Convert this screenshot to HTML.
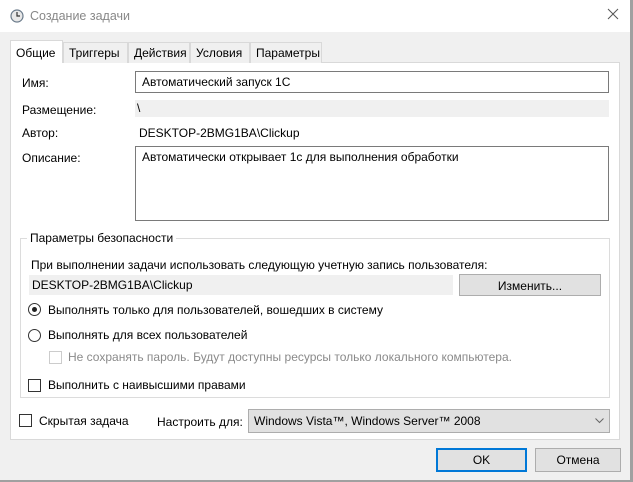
<!DOCTYPE html><html><head><meta charset="utf-8"><style>
*{box-sizing:border-box}body{margin:0;width:633px;height:482px;overflow:hidden;background:#f0f0f0;font-family:"Liberation Sans",sans-serif;font-size:12px;color:#000;position:relative}
.a{position:absolute;white-space:nowrap}
.title{left:0;top:0;width:633px;height:32px;background:#fff}
.tab{top:42px;height:21px;border:1px solid #d9d9d9;border-bottom:none;background:#f0f0f0;padding:3px 5px 0;font-size:12px}
.panel{left:10px;top:62px;width:610px;height:378px;background:#fff;border:1px solid #d9d9d9}
.inp{border:1px solid #7a7a7a;background:#fff;padding:3px 6px}
.gray{background:#f0f0f0}
.btn{border:1px solid #adadad;background:#e1e1e1;text-align:center;padding-top:4px}
.cb{width:13px;height:13px;border:1px solid #333;background:#fff}
.rd{width:13px;height:13px;border:1px solid #333;border-radius:50%;background:#fff}
</style></head><body>
<div class="a title"></div>
<svg class="a" style="left:10px;top:9px" width="14" height="14"><circle cx="7" cy="7" r="6" fill="#e8e8e8" stroke="#6a7a8a" stroke-width="1.2"/><path d="M7 3V7H10" stroke="#333" fill="none" stroke-width="1.2"/></svg>
<div class="a" style="left:30px;top:9px;color:#888;font-size:12.5px">Создание задачи</div>
<svg class="a" style="left:607px;top:8px" width="12" height="12"><path d="M1 1L11 11M11 1L1 11" stroke="#555" stroke-width="1"/></svg>
<div class="a panel"></div>
<div class="a tab" style="left:10px;top:40px;height:23px;background:#fff;width:53px;border-color:#d9d9d9;padding-top:5px">Общие</div>
<div class="a tab" style="left:63px;width:65px">Триггеры</div>
<div class="a tab" style="left:128px;width:62px">Действия</div>
<div class="a tab" style="left:190px;width:60px">Условия</div>
<div class="a tab" style="left:250px;width:72px">Параметры</div>
<div class="a" style="left:22px;top:76px">Имя:</div>
<div class="a inp" style="left:135px;top:71px;width:474px;height:22px">Автоматический запуск 1С</div>
<div class="a" style="left:22px;top:103px">Размещение:</div>
<div class="a gray" style="left:135px;top:100px;width:474px;height:17px;padding:1px 2px">\</div>
<div class="a" style="left:22px;top:126px">Автор:</div>
<div class="a" style="left:139px;top:126px">DESKTOP-2BMG1BA\Clickup</div>
<div class="a" style="left:22px;top:151px">Описание:</div>
<div class="a inp" style="left:135px;top:146px;width:474px;height:75px">Автоматически открывает 1с для выполнения обработки</div>
<div class="a" style="left:20px;top:238px;width:590px;height:160px;border:1px solid #dcdcdc"></div>
<div class="a" style="left:27px;top:231px;background:#fff;padding:0 3px">Параметры безопасности</div>
<div class="a" style="left:31px;top:258px">При выполнении задачи использовать следующую учетную запись пользователя:</div>
<div class="a gray" style="left:29px;top:275px;width:424px;height:20px;padding:3px 3px">DESKTOP-2BMG1BA\Clickup</div>
<div class="a btn" style="left:459px;top:274px;width:142px;height:22px">Изменить...</div>
<div class="a rd" style="left:28px;top:303px"></div><div class="a" style="left:32px;top:307px;width:5px;height:5px;border-radius:50%;background:#222"></div>
<div class="a" style="left:48px;top:303px">Выполнять только для пользователей, вошедших в систему</div>
<div class="a rd" style="left:28px;top:329px"></div>
<div class="a" style="left:48px;top:328px">Выполнять для всех пользователей</div>
<div class="a cb" style="left:49px;top:351px;border-color:#ccc"></div>
<div class="a" style="left:68px;top:350px;color:#8a8a8a">Не сохранять пароль. Будут доступны ресурсы только локального компьютера.</div>
<div class="a cb" style="left:28px;top:379px"></div>
<div class="a" style="left:48px;top:378px">Выполнить с наивысшими правами</div>
<div class="a cb" style="left:19px;top:414px"></div>
<div class="a" style="left:39px;top:414px">Скрытая задача</div>
<div class="a" style="left:157px;top:415px">Настроить для:</div>
<div class="a btn" style="left:248px;top:409px;width:362px;height:24px;text-align:left;padding:4px 5px">Windows Vista™, Windows Server™ 2008</div>
<svg class="a" style="left:595px;top:418px" width="9" height="6"><path d="M0.5 0.5L4.5 4.5L8.5 0.5" stroke="#666" fill="none"/></svg>
<div class="a btn" style="left:436px;top:448px;width:91px;height:24px;border:2px solid #0078d7;padding-top:3px">OK</div>
<div class="a btn" style="left:535px;top:448px;width:86px;height:24px">Отмена</div>
<div class="a" style="left:630px;top:0;width:3px;height:482px;background:#a0a0a0"></div>
<div class="a" style="left:0;top:480px;width:633px;height:2px;background:#a0a0a0"></div>
</body></html>
